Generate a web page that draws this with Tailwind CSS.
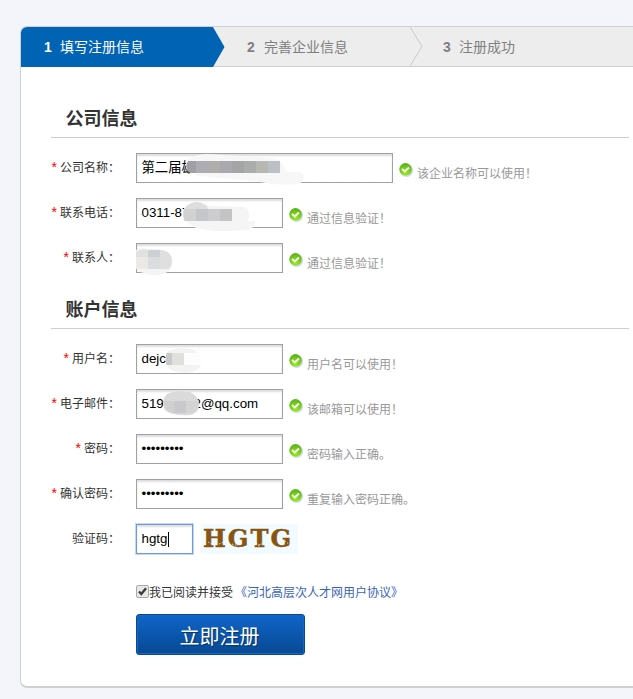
<!DOCTYPE html>
<html lang="zh-CN">
<head>
<meta charset="utf-8">
<title>企业注册</title>
<script src="https://cdn.jsdelivr.net/npm/@tailwindcss/browser@4"></script>
</head>
<body class="h-[699px] w-[633px] overflow-hidden bg-[#f4f5fa] pt-[26px] pl-5 font-['Liberation_Sans','Noto_Sans_CJK_SC',sans-serif] text-xs leading-[18px] text-[#333]">
<svg class="absolute h-0 w-0">
  <defs>
    <radialGradient id="green" cx="50%" cy="80%" r="75%"><stop offset="0" stop-color="#9cec1c"/><stop offset="1" stop-color="#5cb41a"/></radialGradient>
    <symbol id="ok" viewBox="0 0 15 15">
      <circle cx="7.6" cy="7.4" r="6.5" fill="#aebfd0" opacity=".6"/>
      <circle cx="6.5" cy="6.3" r="6.2" fill="url(#green)"/>
      <path d="M3 5.900 5.700 8.500 10 4.500" fill="none" stroke="#fff" stroke-width="1.8"/>
    </symbol>
  </defs>
</svg>
<main class="h-[662px] w-[640px] overflow-hidden rounded-[7px] border border-b-2 border-[#cfd0d1] bg-white">
  <header class="flex h-10 border-b border-[#cfcfcf] bg-[#ededed] text-sm leading-[41px] text-[#808080]">
    <div class="relative w-[204px] shrink-0 pl-[23px] text-white">
      <svg class="absolute top-0 left-0 h-10 w-[204px]" viewBox="0 0 204 40"><path d="M0 0H192L203.500 20 192 40H0Z" fill="#0163b4"/></svg>
      <span class="relative flex h-10"><b class="w-4">1</b><span class="whitespace-nowrap">填写注册信息</span></span>
    </div>
    <div class="flex w-[198px] shrink-0 justify-between pl-[22px]"><span class="flex"><b class="w-[17px]">2</b><span>完善企业信息</span></span>
      <svg class="h-[39px] w-[13px]" viewBox="0 0 13 39"><path d="M0 0 12 19.500 0 39" fill="none" stroke="#cacaca"/></svg>
    </div>
    <div class="flex pl-5"><b class="w-4">3</b><span>注册成功</span></div>
  </header>
  <form class="ml-[30px] w-[578px]">
    <h2 class="h-[71px] border-b border-[#cfcfcf] pt-[39px] pl-[14.5px] text-lg leading-[27px] font-bold">公司信息</h2>
    <div class="mt-[15px] flex flex-col gap-[15px]">
      <div class="flex h-[30px]">
        <label class="flex w-[85px] justify-end pr-4 leading-[30px] whitespace-nowrap"><span class="mr-[3px] pt-1 text-sm text-[#f00]">*</span>公司名称：</label>
        <div class="relative w-[257px] border border-[#a0a1a7] bg-white pl-[4.5px] text-[13.33px] leading-[28px] whitespace-nowrap text-black shadow-[inset_0_2px_2px_#ddd]">第二届雄
          <svg class="absolute -top-px -left-px h-9 w-[180px] overflow-visible" viewBox="0 0 180 36">
            <path d="M50 9Q54 2 70 1L136 5Q148 7 150 19H164Q170 21 166 29Q160 33 135 31Q115 27 62 23Q49 18 50 9Z" fill="#f7f7f7"/>
            <path d="M52 8H60V20H54Q48 14 52 8Z" fill="#a0a0a4"/><path d="M60 8h12v12h-12z" fill="#acacb2"/><path d="M72 8h12v12H72z" fill="#b0aeac"/><path d="M84 8h12v12H84z" fill="#aaa9b0"/><path d="M96 8h12v12H96z" fill="#a5a5a8"/><path d="M108 8h12v12h-12z" fill="#a9acab"/><path d="M120 8h12v12h-12z" fill="#b8b8b2"/><path d="M132 8h12v12h-12z" fill="#bbbfc6"/>
          </svg>
        </div>
        <svg class="mt-2.5 ml-1.5 h-[15px] w-[15px]"><use href="#ok"/></svg><span class="ml-[3px] pt-3 text-[#999]">该企业名称可以使用！</span>
      </div>
      <div class="flex h-[30px]">
        <label class="flex w-[85px] justify-end pr-4 leading-[30px] whitespace-nowrap"><span class="mr-[3px] pt-1 text-sm text-[#f00]">*</span>联系电话：</label>
        <div class="relative w-[147px] border border-[#a0a1a7] bg-white pl-[4.5px] text-[13.33px] leading-[28px] text-black shadow-[inset_0_2px_2px_#ddd]">0311-87
          <svg class="absolute -top-px -left-px h-9 w-[125px] overflow-visible" viewBox="0 0 125 36">
            <path d="M47 12Q53 3 65 4Q69 5 74 8L109 9Q115 12 112 23H119Q119 31 111 32Q80 35 60 30L47 22Z" fill="#f5f5f5"/>
            <path d="M48 11Q53 4 61 4Q68 5 72 10V23H48Z" fill="#dedee0"/><path d="M48 11h12v12H49Q46 18 48 11Z" fill="#d1d1d1"/><path d="M60 11h12v12H60z" fill="#c5c6c9"/><path d="M72 11h12v12H72z" fill="#cdcdcf"/><path d="M84 11h12v12H84z" fill="#c4c4c4"/>
          </svg>
        </div>
        <svg class="mt-2.5 ml-1.5 h-[15px] w-[15px]"><use href="#ok"/></svg><span class="ml-[3px] pt-3 text-[#999]">通过信息验证！</span>
      </div>
      <div class="flex h-[30px]">
        <label class="flex w-[85px] justify-end pr-4 leading-[30px] whitespace-nowrap"><span class="mr-[3px] pt-1 text-sm text-[#f00]">*</span>联系人：</label>
        <div class="relative w-[147px] border border-[#a0a1a7] bg-white shadow-[inset_0_2px_2px_#ddd]">
          <svg class="absolute -top-px -left-px h-9 w-[45px] overflow-visible" viewBox="0 0 45 36">
            <path d="M0 7Q4 4 12 6Q25 5 32 10Q39 18 35 26Q29 33 14 32L1 28Z" fill="#f4f4f4"/>
            <path d="M0 9Q5 5 12 7V14H0Z" fill="#e1e1e1"/><path d="M12 7H24V14H12Z" fill="#ccd0d5"/><path d="M24 7Q35 7 36 17Q36 24 32 26H24Z" fill="#dfdfe0"/><path d="M0 14h12v12H0z" fill="#ece8e6"/><path d="M12 14h12v12H12z" fill="#dbdcde"/>
          </svg>
        </div>
        <svg class="mt-2.5 ml-1.5 h-[15px] w-[15px]"><use href="#ok"/></svg><span class="ml-[3px] pt-3 text-[#999]">通过信息验证！</span>
      </div>
    </div>
    <h2 class="h-14 border-b border-[#cfcfcf] pt-6 pl-[14.5px] text-lg leading-[27px] font-bold">账户信息</h2>
    <div class="mt-[15px] flex flex-col gap-[15px]">
      <div class="flex h-[30px]">
        <label class="flex w-[85px] justify-end pr-4 leading-[30px] whitespace-nowrap"><span class="mr-[3px] pt-1 text-sm text-[#f00]">*</span>用户名：</label>
        <div class="relative w-[147px] border border-[#a0a1a7] bg-white pl-[4.5px] text-[13.33px] leading-[28px] text-black shadow-[inset_0_2px_2px_#ddd]">dejc
          <svg class="absolute -top-px -left-px h-9 w-[70px] overflow-visible" viewBox="0 0 70 36">
            <path d="M31 8Q37 4 46 4Q58 4 63 10H50V21H65Q62 28 49 29Q34 28 30 21Z" fill="#f3f3f3"/><path d="M30 9h19v12H30Z" fill="#e5e5e5"/><path d="M31 9h5v12h-5Q28 16 31 9Z" fill="#c8cac8"/><path d="M36 9h12v12H36z" fill="#dfdfde"/><path d="M48 9h17v12H48z" fill="#fdfdfd"/>
          </svg>
        </div>
        <svg class="mt-2.5 ml-1.5 h-[15px] w-[15px]"><use href="#ok"/></svg><span class="ml-[3px] pt-3 text-[#999]">用户名可以使用！</span>
      </div>
      <div class="flex h-[30px]">
        <label class="flex w-[85px] justify-end pr-4 leading-[30px] whitespace-nowrap"><span class="mr-[3px] pt-1 text-sm text-[#f00]">*</span>电子邮件：</label>
        <div class="relative flex w-[147px] border border-[#a0a1a7] bg-white pl-[4.5px] text-[13.33px] leading-[28px] text-black shadow-[inset_0_2px_2px_#ddd]"><span class="w-[52px]">519</span><span>2@qq.com</span>
          <svg class="absolute -top-px -left-px h-9 w-[70px] overflow-visible" viewBox="0 0 70 36">
            <path d="M31 5Q39 1 54 3Q63 7 63 16Q63 24 54 26Q34 27 29 21Q24 12 31 5Z" fill="#dadada"/><path d="M28 12h10v12Q29 24 28 12Z" fill="#d0d0d0"/><path d="M38 12h12v12H38z" fill="#c9c9cb"/><path d="M50 12h12q0 9-6 12h-6z" fill="#d5d3d4"/>
          </svg>
        </div>
        <svg class="mt-2.5 ml-1.5 h-[15px] w-[15px]"><use href="#ok"/></svg><span class="ml-[3px] pt-3 text-[#999]">该邮箱可以使用！</span>
      </div>
      <div class="flex h-[30px]">
        <label class="flex w-[85px] justify-end pr-4 leading-[30px] whitespace-nowrap"><span class="mr-[3px] pt-1 text-sm text-[#f00]">*</span>密码：</label>
        <div class="w-[147px] border border-[#a0a1a7] bg-white pl-[4.5px] text-[13.33px] leading-[28px] text-black shadow-[inset_0_2px_2px_#ddd]">•••••••••</div>
        <svg class="mt-2.5 ml-1.5 h-[15px] w-[15px]"><use href="#ok"/></svg><span class="ml-[3px] pt-3 text-[#999]">密码输入正确。</span>
      </div>
      <div class="flex h-[30px]">
        <label class="flex w-[85px] justify-end pr-4 leading-[30px] whitespace-nowrap"><span class="mr-[3px] pt-1 text-sm text-[#f00]">*</span>确认密码：</label>
        <div class="w-[147px] border border-[#a0a1a7] bg-white pl-[4.5px] text-[13.33px] leading-[28px] text-black shadow-[inset_0_2px_2px_#ddd]">•••••••••</div>
        <svg class="mt-2.5 ml-1.5 h-[15px] w-[15px]"><use href="#ok"/></svg><span class="ml-[3px] pt-3 text-[#999]">重复输入密码正确。</span>
      </div>
      <div class="flex h-[30px]">
        <label class="flex w-[85px] justify-end pr-4 leading-[30px] whitespace-nowrap">验证码：</label>
        <div class="flex w-[57px] items-center border border-[#6f9ad8] bg-white pl-[4.5px] text-[13.33px] leading-[28px] text-black shadow-[0_0_0_1px_#c5d8f3,inset_0_2px_2px_#ddd]">hgtg<i class="ml-px h-[15px] w-px bg-black"></i></div>
        <svg class="ml-2 h-[30px] w-[97px]" viewBox="0 0 97 30"><path d="M0 0h97v30H0z" fill="#f2fbff"/><text x="2" y="23.500" font-family="DejaVu Serif" font-weight="bold" font-size="25" textLength="91" lengthAdjust="spacing" transform="scale(.97 1)" fill="#875510" stroke="#875510" stroke-width=".5">HGTG</text><path d="M7 18l4 2M18 20l5-2 4 3M31 20l6 2M37 14l4 5M52 18l7 3M78 19l6-2 5 4M57 22l5-3" fill="none" stroke="#f2fbff" stroke-width=".8" stroke-dasharray="1.500 1.500"/></svg>
      </div>
    </div>
    <div class="mt-[29px] ml-[85px] flex h-[18px] whitespace-nowrap">
      <svg class="mt-0.5 h-[13px] w-[13px] shrink-0" viewBox="0 0 13 13"><rect x=".5" y=".5" width="12" height="12" rx="1.500" fill="#e8e8e8" stroke="#aaa"/><path d="M3 6.500 5.300 9 10 3.200" fill="none" stroke="#3c3c3c" stroke-width="2.400"/></svg>
      <span class="pt-px">我已阅读并接受</span><a class="pt-px pl-0.5 text-[#3764b8]">《河北高层次人才网用户协议》</a>
    </div>
    <button type="button" class="mt-[13px] ml-[85px] block h-[41px] w-[169px] rounded-[3px] border border-[#064a91] bg-linear-to-b from-[#1065c9] to-[#074993] pt-[5px] pr-0.5 text-xl leading-[34px] text-white shadow-[inset_0_0_0_1px_#1768bd] [text-shadow:1px_1px_1px_#043568]">立即注册</button>
  </form>
</main>
</body>
</html>
